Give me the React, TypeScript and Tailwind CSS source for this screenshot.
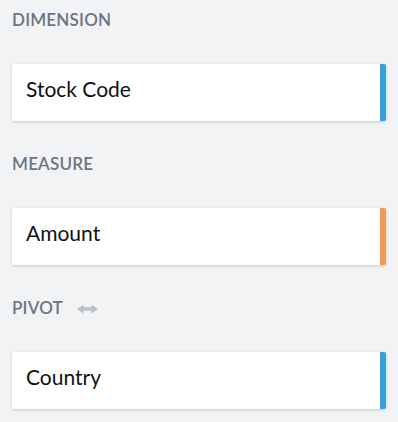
import React from "react";

function Arrow() {
  return (
    <svg width="21" height="10" viewBox="0 0 21 10" className="ml-[14px] mt-[3px]">
      <path d="M0 5 L6.5 0.5 L6.5 3.3 L14.5 3.3 L14.5 0.5 L21 5 L14.5 9.5 L14.5 6.7 L6.5 6.7 L6.5 9.5 Z" fill="#b9c2ca" />
    </svg>
  );
}

function Section({ label, value, color, arrow }: { label: string; value: string; color: string; arrow?: boolean }) {
  return (
    <div className="flex flex-col">
      <div className="h-[39px] flex items-center text-[17px] font-semibold text-[#6b7684] tracking-[0.2px]">
        <span>{label}</span>
        {arrow && <Arrow />}
      </div>
      <div
        className={`mt-[25px] h-[57px] bg-white rounded-[2px] shadow-[0_1px_3px_rgba(0,0,0,0.18)] flex items-center pl-[14px] pb-[8px] text-[21px] text-[#111] border-r-[6px] ${color}`}
      >
        {value}
      </div>
      <div className="h-[23px]" />
    </div>
  );
}

export default function App() {
  return (
    <div className="w-[398px] h-[422px] bg-[#f2f3f5] px-3 overflow-hidden" style={{ fontFamily: "Lato, 'Noto Sans', sans-serif" }}>
      <div className="w-[374px]">
        <Section label="DIMENSION" value="Stock Code" color="border-[#3a9fdf]" />
        <Section label="MEASURE" value="Amount" color="border-[#f39c52]" />
        <Section label="PIVOT" value="Country" color="border-[#3a9fdf]" arrow />
      </div>
    </div>
  );
}
